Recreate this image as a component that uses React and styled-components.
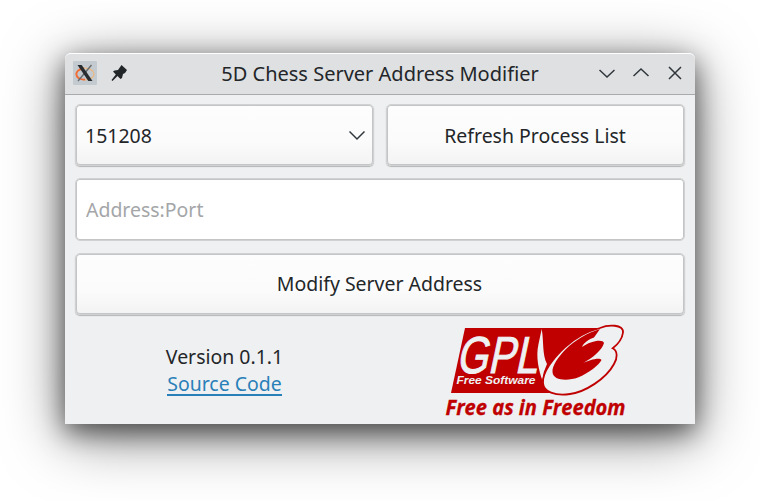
import React from "react";
import styled, { createGlobalStyle } from "styled-components";

const GlobalStyle = createGlobalStyle`
  * { box-sizing: border-box; }
  body { margin: 0; background: #fff; overflow: hidden; }
  #root { font-family: "Noto Sans", sans-serif; font-size: 19.47px; color: #232629; }
`;

const Desktop = styled.main`
  width: 760px;
  height: 501px;
  padding: 53px 65px 0;
  overflow: hidden;
`;

const Window = styled.section`
  display: flex;
  flex-direction: column;
  width: 630px;
  height: 371px;
  background: #eff0f1;
  border-radius: 6px 6px 0 0;
  box-shadow: 0 12px 60px rgba(0, 0, 0, 0.5), 0 8px 26px rgba(0, 0, 0, 0.55);
`;

const TitleBar = styled.header`
  display: grid;
  grid-template-columns: 88px 1fr 90px;
  align-items: center;
  height: 42px;
  padding: 0 6px 0 8px;
  background: #dee0e2;
  border-top: 1px solid #fff;
  border-bottom: 1px solid #a8abad;
  border-radius: 6px 6px 0 0;
`;

const IconGroup = styled.div`
  display: flex;
  align-items: center;
  gap: ${({ $gap }) => $gap}px;
  padding-bottom: 2px;
`;

const Title = styled.h1`
  margin: 0;
  font-size: 20px;
  font-weight: 400;
  line-height: 28px;
  text-align: center;
  white-space: nowrap;
`;

const Glyph = styled.svg`
  display: block;
  flex: none;
  fill: none;
  stroke: #31363b;
  stroke-width: 1.5;
`;

const Content = styled.div`
  display: flex;
  flex-direction: column;
  gap: 12px;
  padding: 9px 10px 0;
`;

const Button = styled.button`
  display: flex;
  align-items: center;
  justify-content: ${({ $spread }) => ($spread ? "space-between" : "center")};
  width: 100%;
  height: 62px;
  padding: ${({ $spread }) => ($spread ? "0 8px 0 9px" : "0 1px 0 0")};
  border: 1px solid #cfd1d2;
  border-radius: 5px;
  background: linear-gradient(#fdfdfd, #fbfbfb 60%, #f3f3f3);
  box-shadow: inset 0 0 0 1px #c3c5c6, 0 1px 1px rgba(0, 0, 0, 0.25);
  color: inherit;
  font: inherit;
  line-height: 28px;
`;

const ControlRow = styled.div`
  display: grid;
  grid-template-columns: 1fr 1fr;
  gap: 12px;

  ${Button} {
    padding-top: 2px;
  }
`;

const AddressInput = styled.input`
  width: 100%;
  height: 63px;
  padding: 0 10px;
  border: 1px solid #cfd1d2;
  border-radius: 5px;
  background: #fff;
  box-shadow: inset 0 0 0 1px #c3c5c6;
  font: inherit;
  &::placeholder { color: #a4a6a8; opacity: 1; }
`;

const Footer = styled.footer`
  display: grid;
  grid-template-columns: 318px 1fr;
`;

const About = styled.div`
  display: flex;
  flex-direction: column;
  align-items: center;
  padding: 16px 19px 0 0;
  line-height: 27px;
`;

const SourceLink = styled.a`
  height: 26px;
  color: #2980b9;
  border-bottom: 2px solid #2980b9;
  text-decoration: none;
`;

const Logo = styled.svg`
  display: block;
  margin: -9px 0 0 47px;
`;

const LogoLetters = styled.text`
  fill: #eff0f1;
  stroke: #eff0f1;
  stroke-width: 1;
  font: 52px "Liberation Sans", sans-serif;
`;

const LogoCaption = styled.text`
  fill: #eff0f1;
  font: italic bold 11.5px "Liberation Sans", sans-serif;
`;

const LogoMotto = styled.text`
  fill: #c00000;
  stroke: #c00000;
  stroke-width: 0.3;
  font: italic bold 20.5px "Open Sans", "Noto Sans", sans-serif;
`;

const AppIcon = () => (
  <svg width="24" height="24" viewBox="0 0 24 24">
    <rect width="24" height="24" rx="1" fill="#c4cbd0" />
    <ellipse cx="12" cy="13" rx="9" ry="5.8" fill="none" stroke="#e8b987" strokeWidth="1.3" />
    <path d="M11 7.5C5 8 3 11 3.5 14C4 17 8 19 12 18.5" fill="none" stroke="#ef6c38" strokeWidth="1.8" />
    <path d="M18.5 4L5 20" stroke="#666b6e" strokeWidth="1.4" />
    <path d="M4.5 4H8.7L19.5 20H15.3Z" fill="#292d30" />
  </svg>
);

const Pin = () => (
  <svg width="17" height="18" viewBox="0 0 17 18">
    <path d="M10.5 1L16 6L14 9L12 10L11 14L9.5 15L6.5 12L1.5 17L0.5 16L4.8 10.5L2 7.5L3.5 6.5L7 6Z" fill="#232629" />
  </svg>
);

const GplLogo = () => (
  <Logo width="190" height="106" viewBox="0 0 190 106">
    <path d="M25 10H162L125 75H11Z" fill="#c00000" />
    <path d="M101.7 11C104 24 102 36 107 46Q103 54 102.3 62C99 53 95.5 39 98.5 26Z" fill="#eff0f1" />
    <path
      d="M160 10C168 6.500 184 6 183 14.500C182 22 177 27 172.700 30.300C178 33 177.500 40 174 46C166 61 145 74 130 76C115 78 103.500 74 103 65C102 55 113 40 125 29C136 19.500 148 13 160 10Z"
      fill="#eff0f1"
      stroke="#c00000"
      strokeWidth="1.8"
    />
    <path
      d="M160 11C147 15 135 22.500 126 31C118 39 112 48 112.500 54C113 63 128 63 138 59.500C149 55 159 47 161.500 42C160 39 149 42 142 45.500C153 40 162 32 164 25C163 20.500 150 23 142 29C144 24.500 149 21 154 19.500Z"
      fill="#c00000"
    />
    <LogoLetters transform="translate(16 54.700) skewX(-12)" textLength="81" lengthAdjust="spacingAndGlyphs">GPL</LogoLetters>
    <LogoCaption x="16.500" y="66" textLength="79" lengthAdjust="spacingAndGlyphs">Free Software</LogoCaption>
    <LogoMotto x="5.500" y="97" textLength="180" lengthAdjust="spacingAndGlyphs">Free as in Freedom</LogoMotto>
  </Logo>
);

export default function App() {
  return (
    <>
      <GlobalStyle />
      <Desktop>
        <Window>
          <TitleBar>
            <IconGroup $gap={14}><AppIcon /><Pin /></IconGroup>
            <Title>5D Chess Server Address Modifier</Title>
            <IconGroup $gap={18}>
              <Glyph width="16" height="16"><path d="M0.500 5L8 12L15.500 5" /></Glyph>
              <Glyph width="16" height="16"><path d="M0.500 11L8 4L15.500 11" /></Glyph>
              <Glyph width="16" height="16"><path d="M2 2L14 14M14 2L2 14" /></Glyph>
            </IconGroup>
          </TitleBar>
          <Content>
            <ControlRow>
              <Button $spread>151208<Glyph width="16" height="16"><path d="M0.500 3.500L8 11L15.500 3.500" /></Glyph></Button>
              <Button>Refresh Process List</Button>
            </ControlRow>
            <AddressInput placeholder="Address:Port" />
            <Button>Modify Server Address</Button>
            <Footer>
              <About><span>Version 0.1.1</span><SourceLink>Source Code</SourceLink></About>
              <GplLogo />
            </Footer>
          </Content>
        </Window>
      </Desktop>
    </>
  );
}
